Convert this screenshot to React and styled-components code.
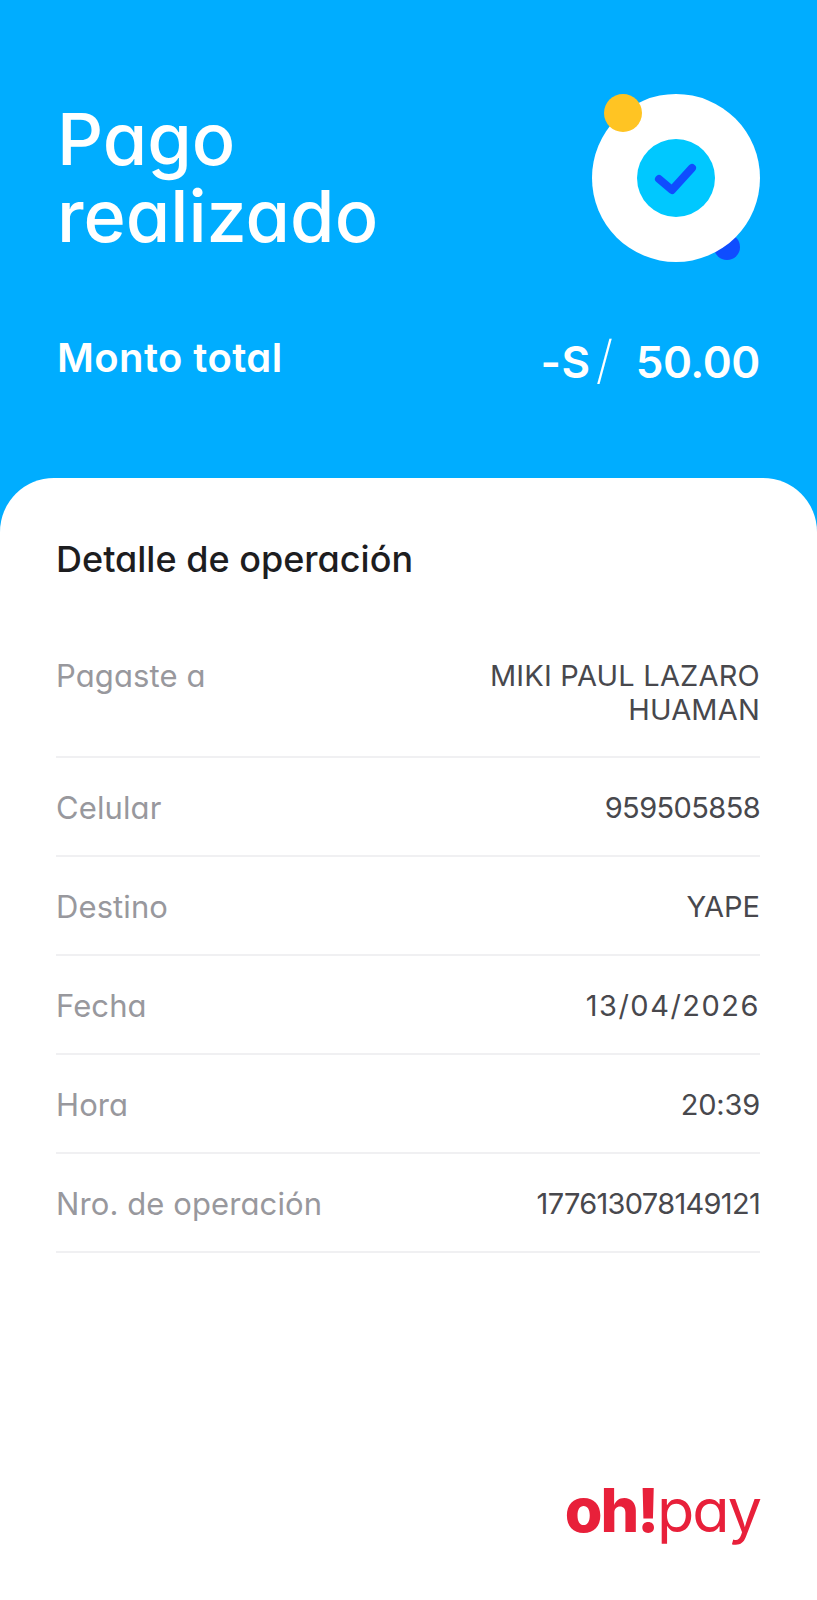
import React from 'react';
import styled, { createGlobalStyle } from 'styled-components';

const FONT = `'Inter', 'Lato', sans-serif`;

const details = [
  { label: 'Pagaste a', value: 'MIKI PAUL LAZARO HUAMAN', tracking: 0.2 },
  { label: 'Celular', value: '959505858', tracking: -0.6 },
  { label: 'Destino', value: 'YAPE', tracking: 0 },
  { label: 'Fecha', value: '13/04/2026', tracking: 1.5 },
  { label: 'Hora', value: '20:39', tracking: -0.2 },
  { label: 'Nro. de operación', value: '177613078149121', tracking: -0.7 },
];

const App = () => {
  return (
    <Page>
      <GlobalStyle />
      <Hero>
        <HeroTop>
          <Title>Pago<br />realizado</Title>
          <SuccessBadge />
        </HeroTop>
        <TotalRow>
          <TotalLabel>Monto total</TotalLabel>
          <TotalAmount>
            <Currency>-S<Slash>/</Slash></Currency>50.00
          </TotalAmount>
        </TotalRow>
      </Hero>
      <Card>
        <CardTitle>Detalle de operación</CardTitle>
        <DetailList>
          {details.map((item) => (
            <DetailRow key={item.label}>
              <DetailLabel>{item.label}</DetailLabel>
              <DetailValue $tracking={item.tracking}>{item.value}</DetailValue>
            </DetailRow>
          ))}
        </DetailList>
        <Footer>
          <Logo>
            <LogoBold>oh!</LogoBold>pay
          </Logo>
        </Footer>
      </Card>
    </Page>
  );
};

const SuccessBadge = () => (
  <BadgeSvg viewBox="0 0 168 170" aria-hidden="true">
    <circle cx="135" cy="154" r="13" fill="#0f4dff" />
    <circle cx="84" cy="85" r="84" fill="#ffffff" />
    <circle cx="31" cy="20" r="19" fill="#ffc423" />
    <circle cx="84" cy="85" r="39" fill="#00c8ff" />
    <path
      d="M67 86 L80 97 L100 75"
      fill="none"
      stroke="#0f4dff"
      strokeWidth="8"
      strokeLinecap="round"
      strokeLinejoin="round"
    />
  </BadgeSvg>
);

const GlobalStyle = createGlobalStyle`
  html, body {
    margin: 0;
    padding: 0;
    background: #ffffff;
  }
  * {
    box-sizing: border-box;
  }
`;

const Page = styled.div`
  display: flex;
  flex-direction: column;
  width: 817px;
  height: 1600px;
  background: #00adff;
  font-family: ${FONT};
  font-feature-settings: 'cv11' 1;
  overflow: hidden;
`;

const Hero = styled.header`
  height: 478px;
  padding: 93px 57px 0;
  flex: none;
`;

const HeroTop = styled.div`
  display: flex;
  justify-content: space-between;
  align-items: flex-start;
`;

const Title = styled.h1`
  margin: 7px 0 0;
  font-size: 72px;
  line-height: 77px;
  font-weight: 500;
  color: #ffffff;
`;

const BadgeSvg = styled.svg`
  width: 168px;
  height: 170px;
  flex: none;
`;

const TotalRow = styled.div`
  display: flex;
  justify-content: space-between;
  align-items: center;
  margin-top: 62px;
`;

const TotalLabel = styled.span`
  font-size: 40px;
  font-weight: 600;
  letter-spacing: 0.4px;
  color: #ffffff;
`;

const TotalAmount = styled.span`
  display: flex;
  align-items: baseline;
  font-size: 44px;
  font-weight: 600;
  letter-spacing: -0.4px;
  color: #ffffff;
  margin-top: 10px;
`;

const Currency = styled.span`
  margin-right: 22px;
  letter-spacing: 0.5px;
`;

const Slash = styled.span`
  margin-left: 5px;
  font-size: 52px;
  line-height: 0;
  font-weight: 200;
`;

const Card = styled.main`
  flex: 1;
  display: flex;
  flex-direction: column;
  background: #ffffff;
  border-radius: 54px 54px 0 0;
  padding: 59px 57px 0 56px;
`;

const CardTitle = styled.h2`
  margin: 0;
  font-size: 36px;
  line-height: 44px;
  font-weight: 500;
  color: #1d1d1f;
`;

const DetailList = styled.div`
  margin-top: 49px;
`;

const DetailRow = styled.div`
  display: flex;
  justify-content: space-between;
  align-items: flex-start;
  padding: 31px 0 28px;
  border-bottom: 2px solid #f0f0f2;

  &:first-child {
    padding-top: 27px;
    padding-bottom: 29px;
  }
`;

const DetailLabel = styled.span`
  font-size: 31px;
  line-height: 38px;
  letter-spacing: 0.1px;
  color: #98989d;
  white-space: nowrap;
`;

const DetailValue = styled.span`
  max-width: 290px;
  margin-top: 2px;
  font-size: 29px;
  line-height: 34px;
  letter-spacing: ${(props) => props.$tracking}px;
  text-align: right;
  color: #48484d;
`;

const Footer = styled.div`
  margin-top: auto;
  padding-bottom: 52px;
  display: flex;
  justify-content: flex-end;
`;

const Logo = styled.div`
  font-size: 61px;
  line-height: 76px;
  font-weight: 400;
  letter-spacing: -2px;
  color: #e8203a;
`;

const LogoBold = styled.span`
  font-weight: 800;
`;

export default App;
